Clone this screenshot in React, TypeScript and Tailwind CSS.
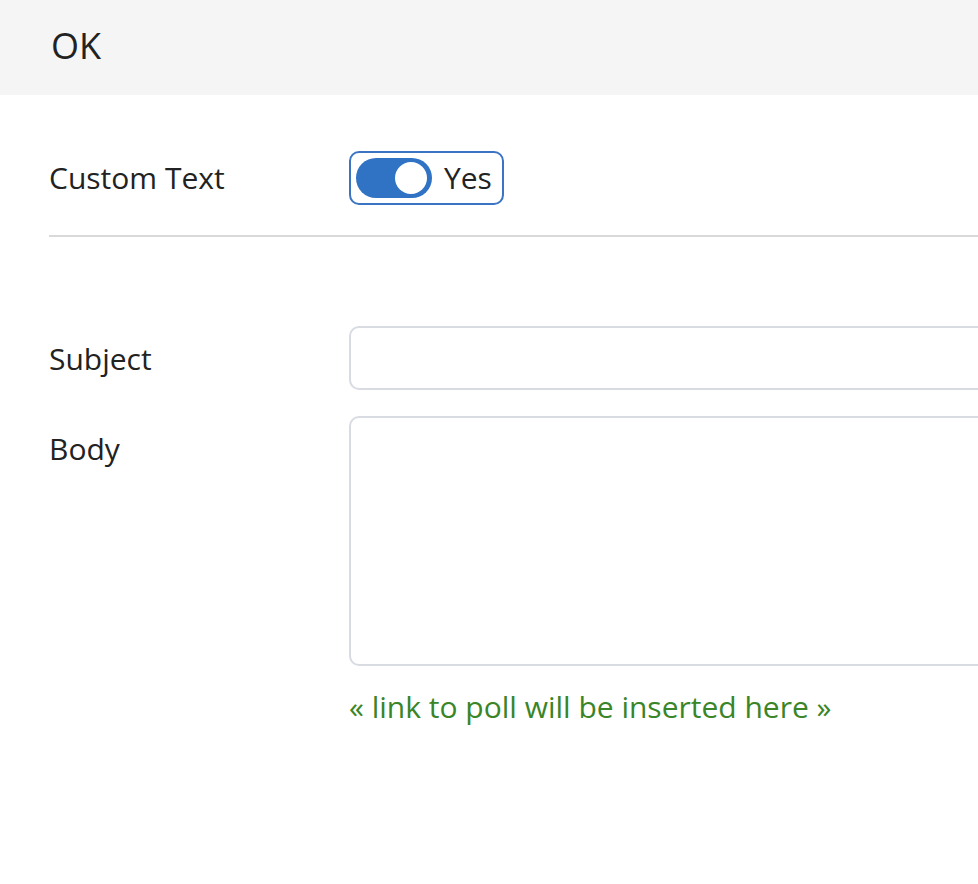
export default function App() {
  return (
    <div className="w-full h-[884px] overflow-hidden bg-white font-['Open_Sans',sans-serif] text-[#222]">
      <div className="w-[1300px]">
        <div className="h-[95px] bg-[#f5f5f5] flex items-center pl-[51px] pb-[4px]">
          <span className="text-[36px] leading-none">OK</span>
        </div>

        <div className="pl-[49px]">
          <div className="flex items-center pt-[56px] pb-[30px] border-b-2 border-[#d9d9d9]">
            <div className="w-[300px] text-[30px] leading-none">Custom Text</div>
            <div className="flex items-center gap-3 border-2 border-[#3a74c2] rounded-[10px] pl-[5px] pr-[10px] h-[54px]">
              <div className="relative w-[76px] h-[40px] rounded-full bg-[#3072c4]">
                <div className="absolute right-[5px] top-[4px] w-[32px] h-[32px] rounded-full bg-white"></div>
              </div>
              <span className="text-[30px] leading-none">Yes</span>
            </div>
          </div>

          <div className="pt-[89px]">
            <div className="flex items-center">
              <div className="w-[300px] text-[30px]">Subject</div>
              <div className="flex-1 h-[64px] border-2 border-[#d8dce2] rounded-[10px]"></div>
            </div>
            <div className="flex mt-[26px]">
              <div className="w-[300px] text-[30px] pt-[10px]">Body</div>
              <div className="flex-1">
                <div className="h-[250px] border-2 border-[#d8dce2] rounded-[10px]"></div>
                <div className="text-[30px] text-[#3a8527] mt-[18px]">« link to poll will be inserted here »</div>
              </div>
            </div>
          </div>
        </div>
      </div>
    </div>
  );
}
